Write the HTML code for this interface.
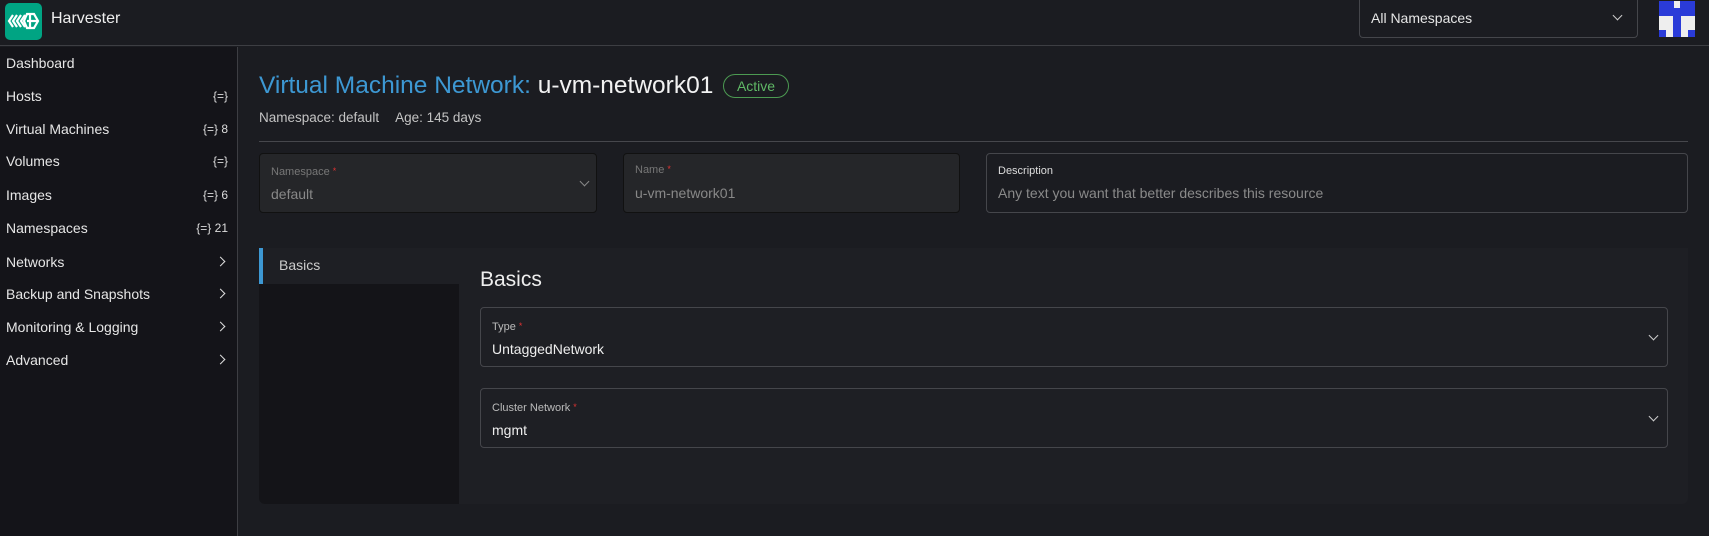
<!DOCTYPE html>
<html><head><meta charset="utf-8"><style>
*{box-sizing:border-box;margin:0;padding:0}
body{width:1709px;height:536px;background:#1b1c21;font-family:"Liberation Sans",sans-serif;color:#e6e6e6;position:relative;overflow:hidden}
.abs{position:absolute}
.hdr{left:0;top:0;width:1709px;height:46px;border-bottom:1px solid #3d3e43;background:#1b1c21}
.side{left:0;top:47px;width:238px;height:489px;background:#141419;border-right:1px solid #3d3e43}
.item{position:absolute;left:6px;width:222px;font-size:14px;color:#e6e6e6;line-height:18px}
.item .r{position:absolute;right:0;top:0;font-size:12px;color:#ddd}
.chev{position:absolute;right:4px;top:5px;width:7px;height:7px;border-right:1.6px solid #ddd;border-top:1.6px solid #ddd;transform:rotate(45deg)}
.field{position:absolute;border:1px solid #45464b;border-radius:4px}
.lab{position:absolute;left:11px;font-size:11px;color:#bbb}
.lab b{color:#d33;font-weight:normal;font-size:9px;vertical-align:top}
.val{position:absolute;left:11px;font-size:14px}
.dd{position:absolute;width:7px;height:7px;border-right:1.5px solid #ccc;border-bottom:1.5px solid #ccc;transform:rotate(45deg)}
</style></head><body>
<div class="abs hdr">
 <div class="abs" style="left:5px;top:3px;width:37px;height:37px;background:#00a483;border-radius:5px">
  <svg width="37" height="37" viewBox="0 0 37 37"><g fill="none" stroke="#fff" stroke-width="2.2"><path d="M8 12l-4 6 4 6M12 12l-4 6 4 6M16 12l-4 6 4 6M20 12l-4 6 4 6"/><path d="M22 11h7l4 7-4 7h-7l-3-7z"/><path d="M22 18h10M25 11v14"/></g></svg>
 </div>
 <div class="abs" style="left:51px;top:10px;font-size:16px;color:#eee">Harvester</div>
 <div class="abs" style="left:1359px;top:0;width:279px;height:38px;border:1px solid #45464b;border-top:none;border-radius:0 0 4px 4px">
  <div class="abs" style="left:11px;top:10px;font-size:14px">All Namespaces</div>
  <div class="dd" style="right:16px;top:12px"></div>
 </div>
 <svg class="abs" style="left:1659px;top:1px" width="36" height="36" viewBox="0 0 36 36"><rect width="36" height="36" fill="#2a3bd8"/><rect x="0" y="15" width="36" height="21" fill="#eee"/><rect x="14" y="15" width="8" height="21" fill="#2a3bd8"/><rect x="0" y="29" width="7" height="7" fill="#2a3bd8"/><rect x="29" y="29" width="7" height="7" fill="#2a3bd8"/><rect x="15" y="0" width="6" height="7" fill="#eee"/></svg>
</div>
<div class="abs side">
 <div class="item" style="top:7px">Dashboard</div>
 <div class="item" style="top:40px">Hosts<span class="r">{=}</span></div>
 <div class="item" style="top:73px">Virtual Machines<span class="r">{=} 8</span></div>
 <div class="item" style="top:105px">Volumes<span class="r">{=}</span></div>
 <div class="item" style="top:139px">Images<span class="r">{=} 6</span></div>
 <div class="item" style="top:172px">Namespaces<span class="r">{=} 21</span></div>
 <div class="item" style="top:206px">Networks<span class="chev"></span></div>
 <div class="item" style="top:238px">Backup and Snapshots<span class="chev"></span></div>
 <div class="item" style="top:271px">Monitoring &amp; Logging<span class="chev"></span></div>
 <div class="item" style="top:304px">Advanced<span class="chev"></span></div>
</div>
<div class="abs" style="left:259px;top:71px;font-size:24.5px;line-height:30px;white-space:nowrap"><span style="color:#3d98d3">Virtual Machine Network:</span> <span style="color:#f2f2f2">u-vm-network01</span></div>
<div class="abs" style="left:723px;top:74px;width:66px;height:24px;border:1px solid #4c9a52;border-radius:12px;color:#5fb866;font-size:14px;text-align:center;line-height:22px">Active</div>
<div class="abs" style="left:259px;top:110px;font-size:13.5px;color:#c4c4c4">Namespace: default<span style="margin-left:16px">Age: 145 days</span></div>
<div class="abs" style="left:259px;top:141px;width:1429px;height:1px;background:#46474c"></div>
<div class="field" style="left:259px;top:153px;width:338px;height:60px;background:#252629;border-color:#111">
 <div class="lab" style="top:12px;color:#777">Namespace <b>*</b></div><div class="val" style="top:32px;color:#888">default</div><div class="dd" style="right:8px;top:24px;border-color:#888"></div></div>
<div class="field" style="left:623px;top:153px;width:337px;height:60px;background:#252629;border-color:#111">
 <div class="lab" style="top:10px;color:#777">Name <b>*</b></div><div class="val" style="top:31px;color:#888">u-vm-network01</div></div>
<div class="field" style="left:986px;top:153px;width:702px;height:60px">
 <div class="lab" style="top:11px;color:#ddd">Description</div><div class="val" style="top:31px;color:#8a8a8a">Any text you want that better describes this resource</div></div>
<div class="abs" style="left:259px;top:248px;width:1429px;height:256px;background:#1e1f24;border-radius:0 0 6px 6px"></div>
<div class="abs" style="left:259px;top:284px;width:200px;height:220px;background:#141418;border-radius:0 0 0 6px"></div>
<div class="abs" style="left:259px;top:248px;width:200px;height:36px;background:#1e1f24"></div>
<div class="abs" style="left:259px;top:248px;width:4px;height:36px;background:#3d98d3"></div>
<div class="abs" style="left:279px;top:257px;font-size:14px;color:#ccc">Basics</div>
<div class="abs" style="left:480px;top:268px;font-size:21px;color:#eee">Basics</div>
<div class="field" style="left:480px;top:307px;width:1188px;height:60px">
 <div class="lab" style="top:13px">Type <b>*</b></div><div class="val" style="top:33px;color:#eee">UntaggedNetwork</div><div class="dd" style="right:10px;top:24px"></div></div>
<div class="field" style="left:480px;top:388px;width:1188px;height:60px">
 <div class="lab" style="top:13px">Cluster Network <b>*</b></div><div class="val" style="top:33px;color:#eee">mgmt</div><div class="dd" style="right:10px;top:24px"></div></div>
</body></html>
